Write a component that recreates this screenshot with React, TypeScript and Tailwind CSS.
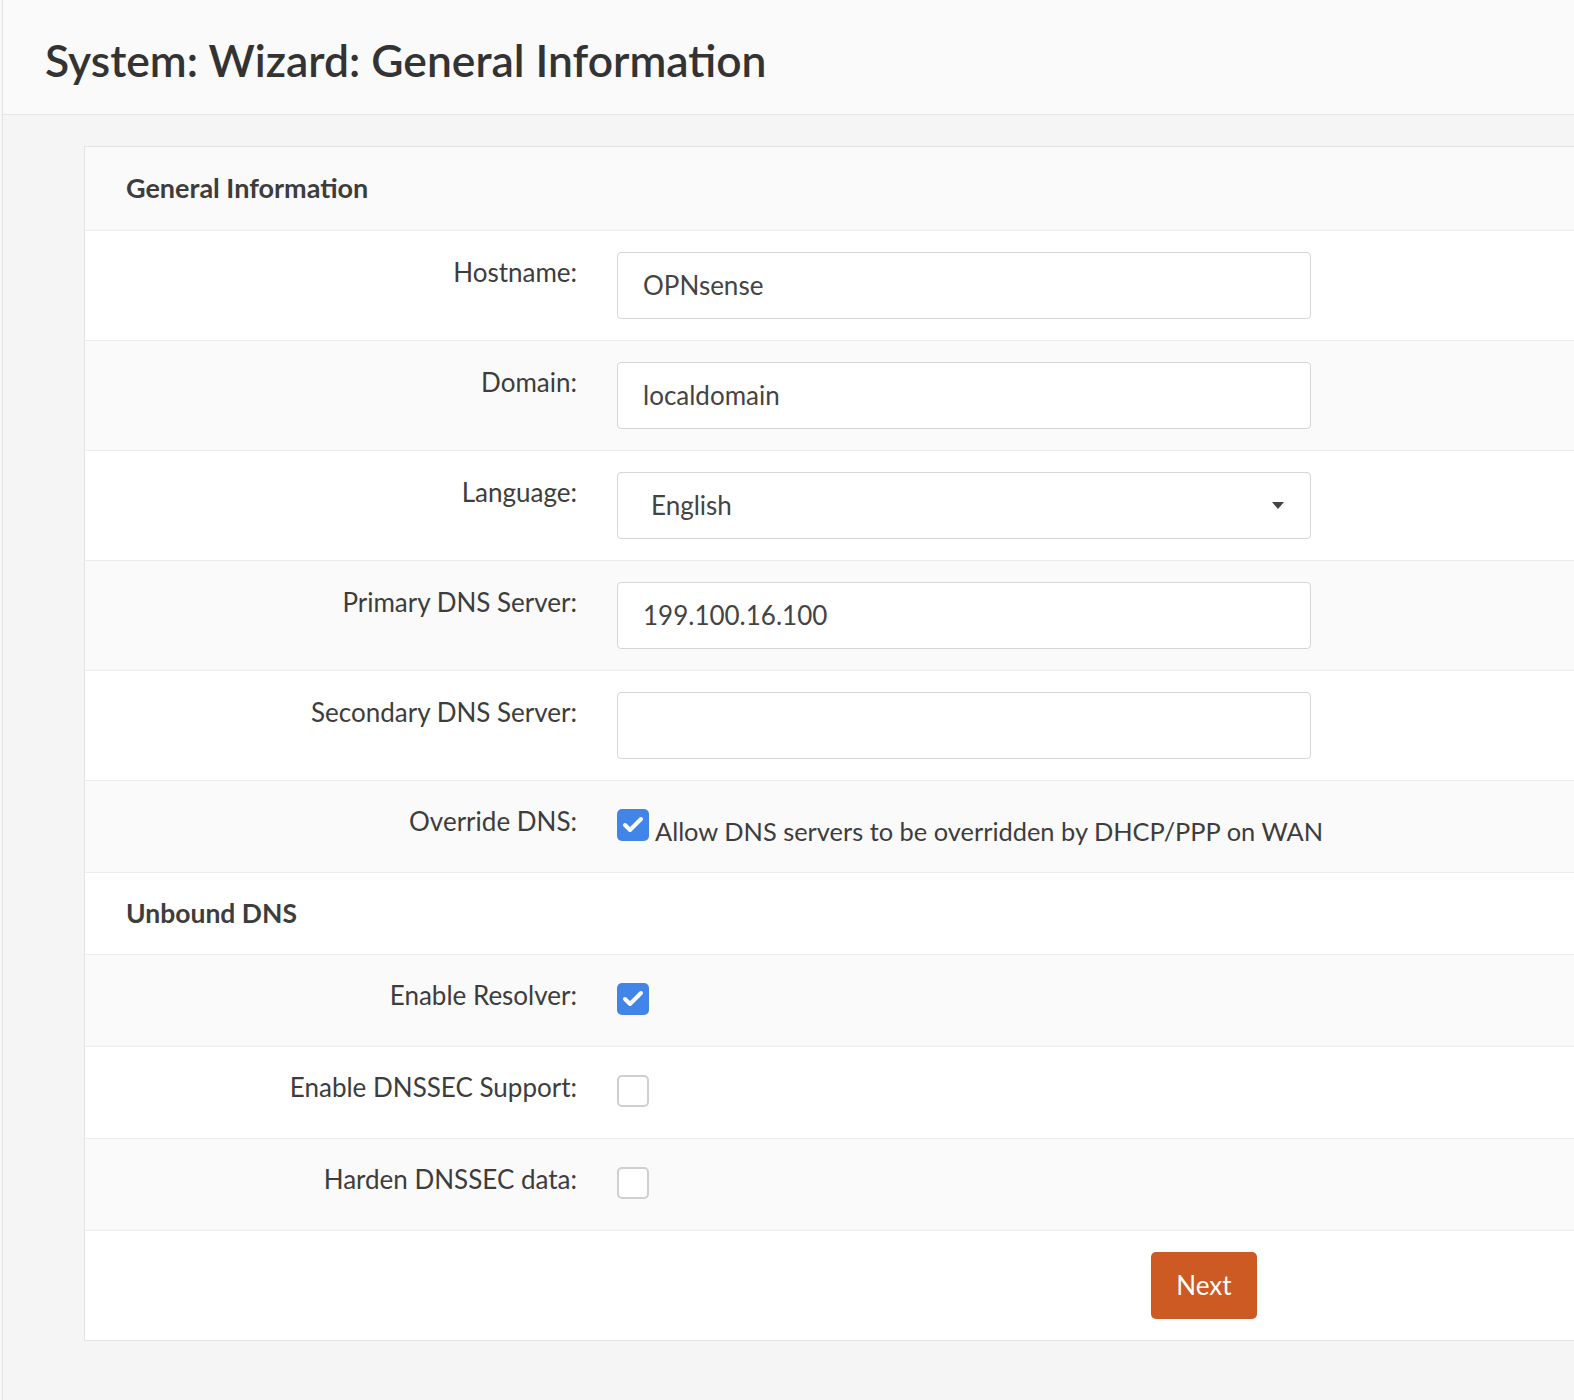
import { Check } from "lucide-react";

const font = { fontFamily: "Lato, 'Noto Sans', sans-serif" };

function Label({ children }: { children: React.ReactNode }) {
  return (
    <div className="w-[532px] shrink-0 pr-[40px] text-right text-[26px] leading-[36px] text-[#3d3d3d]">
      {children}
    </div>
  );
}

function TextRow({
  label,
  value,
  shade,
}: {
  label: string;
  value: string;
  shade?: boolean;
}) {
  return (
    <div
      className={`flex h-[110px] border-t border-[#ececec] ${
        shade ? "bg-[#fafafa]" : "bg-white"
      }`}
    >
      <div className="pt-[23px]">
        <Label>{label}</Label>
      </div>
      <div className="pt-[21px]">
        <div className="flex h-[67px] w-[694px] items-center rounded-[4px] border border-[#d6d6d6] bg-white pl-[25px] text-[26px] text-[#444]">
          {value}
        </div>
      </div>
    </div>
  );
}

function Box({ checked }: { checked: boolean }) {
  return checked ? (
    <div className="flex h-[32px] w-[32px] shrink-0 items-center justify-center rounded-[5px] bg-[#4285e8]">
      <Check size={24} strokeWidth={4} className="text-white" />
    </div>
  ) : (
    <div className="h-[32px] w-[32px] shrink-0 rounded-[5px] border-2 border-[#cfcfcf] bg-white" />
  );
}

function CheckRow({
  label,
  checked,
  shade,
  text,
}: {
  label: string;
  checked: boolean;
  shade?: boolean;
  text?: string;
}) {
  return (
    <div
      className={`flex h-[92px] items-start border-t border-[#ececec] ${
        shade ? "bg-[#fafafa]" : "bg-white"
      }`}
    >
      <div className="pt-[22px]">
        <Label>{label}</Label>
      </div>
      <div className="flex items-start pt-[28px]">
        <Box checked={checked} />
        {text && (
          <span className="ml-[6px] mt-[8px] text-[25.4px] leading-[28px] text-[#3d3d3d]">
            {text}
          </span>
        )}
      </div>
    </div>
  );
}

export default function App() {
  return (
    <div
      className="flex h-[1400px] w-full overflow-hidden bg-[#f7f7f7]"
      style={font}
    >
      <div className="w-[3px] shrink-0 border-r border-[#e3e3e3] bg-[#f7f7f7]" />
      <div className="flex flex-1 flex-col">
        {/* page title */}
        <div className="h-[115px] shrink-0 border-b border-[#e6e6e6] bg-[#fafafa] pl-[42px] pt-[30px]">
          <h1 className="text-[44.4px] font-semibold leading-[60px] text-[#333]">
            System: Wizard: General Information
          </h1>
        </div>

        <div className="flex-1 bg-[#f5f5f5] pl-[81px] pt-[31px]">
          <div className="border border-r-0 border-[#e3e3e3] bg-white">
            <div className="flex h-[83px] items-center bg-[#fafafa] pl-[41px] text-[27px] font-bold text-[#3d3d3d]">
              General Information
            </div>
            <TextRow label="Hostname:" value="OPNsense" />
            <TextRow label="Domain:" value="localdomain" shade />
            <div className="flex h-[110px] border-t border-[#ececec] bg-white">
              <div className="pt-[23px]">
                <Label>Language:</Label>
              </div>
              <div className="pt-[21px]">
                <div className="flex h-[67px] w-[694px] items-center justify-between rounded-[4px] border border-[#d6d6d6] bg-white pl-[33px] pr-[26px] text-[26px] text-[#444]">
                  <span>English</span>
                  <svg width="12" height="7" viewBox="0 0 12 7">
                    <path d="M0 0h12L6 7z" fill="#444" />
                  </svg>
                </div>
              </div>
            </div>
            <TextRow label="Primary DNS Server:" value="199.100.16.100" shade />
            <TextRow label="Secondary DNS Server:" value="" />
            <CheckRow
              label="Override DNS:"
              checked
              shade
              text="Allow DNS servers to be overridden by DHCP/PPP on WAN"
            />
            <div className="flex h-[82px] items-center border-t border-[#ececec] bg-white pl-[41px] text-[26.5px] font-bold text-[#3d3d3d]">
              Unbound DNS
            </div>
            <CheckRow label="Enable Resolver:" checked shade />
            <CheckRow label="Enable DNSSEC Support:" checked={false} />
            <CheckRow label="Harden DNSSEC data:" checked={false} shade />
            <div className="flex h-[110px] border-t border-[#ececec] bg-white pl-[1066px] pt-[21px]">
              <button className="h-[67px] w-[106px] rounded-[5px] bg-[#cc5a22] text-[26px] text-white">
                Next
              </button>
            </div>
          </div>
        </div>
      </div>
    </div>
  );
}
